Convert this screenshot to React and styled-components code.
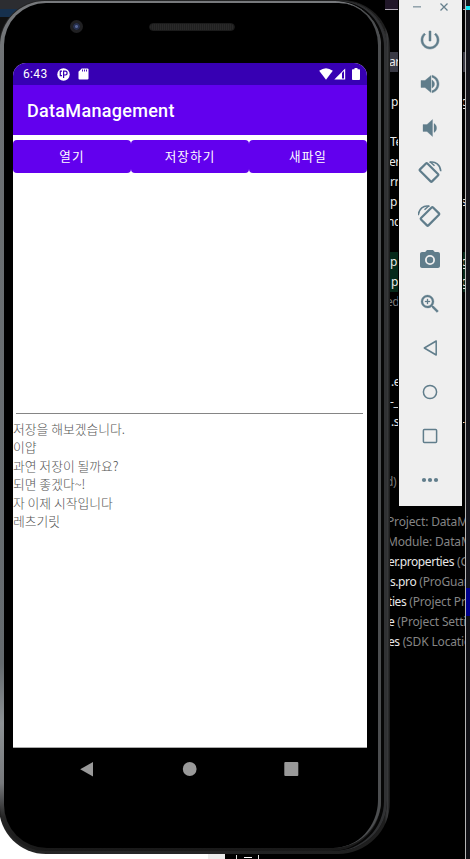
import React from "react";
import styled, { createGlobalStyle } from "styled-components";

const GlobalStyle = createGlobalStyle`
  * { box-sizing: border-box; }
  body { margin: 0; background: #000; overflow: hidden; }
`;

const Desktop = styled.main`
  position: relative;
  width: 470px;
  height: 859px;
  overflow: hidden;
  background: #000;
`;

/* IDE behind the emulator */
const Ide = styled.div`
  position: absolute;
  inset: 0;
  display: grid;
  grid-template-columns: 385px 80px 1px 4px;
`;
const PageBehind = styled.div`
  display: flex;
  flex-direction: column;
  justify-content: space-between;
`;
const TopCorner = styled.div`
  width: 60px;
  height: 50px;
  background: linear-gradient(#2c2d31 9px, #16304d 9px 17px, #111 17px);
`;
const BottomCorner = styled.div`
  height: 99px;
  background: linear-gradient(90deg, #fff 208px, #ececec 208px 225px, #000 225px);
`;
const Tree = styled.div`
  overflow: hidden;
`;
const TreeHead = styled.div`
  height: 10px;
  margin-left: -25px;
  background: #211729;
  border-bottom: 1px solid #b0aab5;
`;
const TreeRows = styled.div`
  padding-top: 2px;
`;
const Row = styled.div`
  display: flex;
  justify-content: space-between;
  height: 20px;
  padding-left: ${(p) => p.$x || 0}px;
  background: ${(p) => p.$bg || "transparent"};
  color: ${(p) => p.$color || "#e8e8e8"};
  font: 12px/20px "Noto Sans", "Noto Sans CJK KR", sans-serif;
  letter-spacing: -0.42px;
  white-space: pre;
`;
const Dim = styled.span`
  flex: 1;
  color: #858585;
  letter-spacing: -0.15px;
`;
const Tail = styled.span`
  width: 4px;
`;
const Divider = styled.div`
  background: #b5b5b5;
`;
const Edge = styled.div`
  background: linear-gradient(#15151c 6px, #13e5f5 6px 10px, #15151c 10px 588px, #00008c 588px 616px, #111116 616px);
`;
const BottomTab = styled.div`
  position: absolute;
  left: 236px;
  top: 855px;
  width: 23px;
  height: 4px;
  border: solid #ddd;
  border-width: 0 1px;
  display: flex;
  justify-content: center;
  align-items: center;
  &::after { content: ""; width: 8px; height: 1px; background: #fff; }
`;

/* Phone */
const Phone = styled.section`
  position: absolute;
  left: -1px;
  top: 0;
  width: 391px;
  height: 854px;
  padding: 1px 3px 3px 1px;
  border-radius: 46px 48px 52px 47px;
  background: linear-gradient(90deg, #222 0 1px, #262728 30%, #1e1e1e 98.6%, #3a3b3d 99.3%, #161616);
`;
const Bezel = styled.div`
  height: 100%;
  padding: 2px 6px 3px 4px;
  border-radius: 45px 46px 50px 46px;
  background: linear-gradient(180deg, #77797c, #6c7073 10%, #656b6f 78%, #8d9295 85%, #77797c 92%, #252525 96%, #191919);
  box-shadow: inset -3px 0 0 #303133, inset -6px 0 0 #060606;
`;
const Face = styled.div`
  display: flex;
  flex-direction: column;
  height: 100%;
  padding: 0 10px 0 9px;
  border-right: 3px solid #4c4e50;
  border-radius: 42px 42px 48px 43px;
  background: #000;
`;
const Hardware = styled.div`
  display: flex;
  align-items: flex-start;
  height: 60px;
  padding: 17px 0 0 57px;
`;
const Camera = styled.div`
  width: 13px;
  height: 13px;
  border: 3px solid #202022;
  border-radius: 50%;
  background: radial-gradient(circle, #566595 0 1px, #27304d 2px 3px, #101522 4px);
`;
const Speaker = styled.div`
  width: 86px;
  height: 8px;
  margin: 3px 0 0 66px;
  border-radius: 4px;
  border: 1px solid #1b1b1b;
  background: repeating-linear-gradient(90deg, #292929 0 1px, #202020 1px 2px);
`;
const Screen = styled.div`
  width: 354px;
  height: 685px;
  flex: none;
  display: flex;
  flex-direction: column;
  overflow: hidden;
  border-radius: 13px 13px 0 0;
  border-bottom: 1px solid #aaa;
  background: #fff;
`;
const StatusBar = styled.div`
  display: flex;
  align-items: center;
  height: 22px;
  padding: 0 7px 0 10px;
  background: #3700b3;
  color: #fff;
  font: 12px/22px Roboto, sans-serif;
  svg { display: block; }
`;
const Clock = styled.span`
  width: 34px;
  letter-spacing: 0.35px;
`;
const StatusIcons = styled.div`
  display: flex;
  align-items: center;
  gap: ${(p) => p.$gap}px;
  margin-left: ${(p) => (p.$end ? "auto" : 0)};
`;
const AppBar = styled.header`
  height: 50px;
  flex: none;
  padding-left: 14px;
  background: #6200ee;
  color: #fff;
  font: 500 18px/52px Roboto, sans-serif;
  letter-spacing: 0.3px;
`;
const Buttons = styled.div`
  display: grid;
  grid-template-columns: repeat(3, 1fr);
  padding-top: 5px;
  height: 38px;
`;
const AppButton = styled.button`
  padding: 0 0 2px;
  border: 0;
  border-radius: 4px;
  background: #6200ee;
  color: #fff;
  font: 400 12.6px/31px "Noto Sans CJK KR", sans-serif;
  letter-spacing: 1.1px;
`;
const Editor = styled.div`
  height: 241px;
  flex: none;
  margin: 0 4px 0 3px;
  border-bottom: 1px solid #858585;
`;
const Notes = styled.div`
  margin-top: 6px;
  color: #555;
  font: 300 12.8px/18.4px "Noto Sans CJK KR", sans-serif;
  white-space: pre;
`;
const NavBar = styled.nav`
  display: flex;
  justify-content: space-between;
  padding: 12px 68px 0 66px;
  height: 44px;
`;

/* Emulator controls */
const Controls = styled.aside`
  position: absolute;
  left: 399px;
  top: 0;
  width: 63px;
  height: 506px;
  display: flex;
  flex-direction: column;
  background: #efefef;
  color: #607d8b;
  outline: 1px solid #000;
`;
const WindowButtons = styled.div`
  display: flex;
  height: 18px;
  padding: 2px 0 0 13px;
  gap: 17px;
`;
const Control = styled.div`
  display: grid;
  place-items: center;
  height: 44px;
  padding-right: 2px;
`;

const Icon = ({ children }) => (
  <svg width="24" height="24" viewBox="0 0 24 24" fill="currentColor">{children}</svg>
);

const RotateShape = () => (
  <g fill="none" stroke="currentColor">
    <rect x="5.800" y="3.900" width="10.400" height="17" rx="1" strokeWidth="2.200" transform="rotate(-45 11 12.400)" />
    <path d="M11.500 2.300C17.500 .8 22.300 5 22.800 11.200" strokeWidth="1.500" />
    <path d="M12 1.800l4.500 4" strokeWidth="1.500" />
  </g>
);

const controls = [
  <Icon><path d="M13 3h-2v10h2V3zm4.83 2.17-1.42 1.42C17.99 7.86 19 9.81 19 12c0 3.87-3.13 7-7 7s-7-3.13-7-7c0-2.19 1.01-4.14 2.58-5.42L6.17 5.17C4.23 6.82 3 9.26 3 12c0 4.97 4.03 9 9 9s9-4.03 9-9c0-2.74-1.23-5.18-3.17-6.83z" stroke="currentColor" strokeWidth=".5" /></Icon>,
  <Icon><path d="M3 8.500v7h4l6 5V3.500l-6 5H3zm13.500 3.500c0-1.770-1.020-3.290-2.500-4.030v8.050c1.480-.73 2.500-2.250 2.500-4.020zM14 3.230v2.060c2.890.86 5 3.540 5 6.710s-2.110 5.850-5 6.710v2.060c4.010-.91 7-4.490 7-8.770s-2.990-7.860-7-8.770z" stroke="currentColor" strokeWidth=".4" /></Icon>,
  <Icon><path d="M5 8.500v7h4l5.500 5V3.500L9 8.500H5zm11-1v9c1.500-.9 2.600-2.500 2.600-4.500S17.500 8.400 16 7.500z" stroke="currentColor" strokeWidth=".3" /></Icon>,
  <Icon><RotateShape /></Icon>,
  <Icon><g transform="translate(23 0) scale(-1 1)"><RotateShape /></g></Icon>,
  <Icon><path fillRule="evenodd" d="M9 2 7.170 4H4c-1.100 0-2 .9-2 2v12c0 1.100.9 2 2 2h16c1.100 0 2-.9 2-2V6c0-1.100-.9-2-2-2h-3.170L15 2H9zm3 15a5 5 0 1 1 0-10 5 5 0 0 1 0 10z" /><circle cx="12" cy="12" r="3.200" /></Icon>,
  <Icon><path d="M15.5 14h-.79l-.28-.27A6.471 6.471 0 0 0 16 9.500 6.500 6.500 0 1 0 9.500 16c1.610 0 3.090-.59 4.230-1.570l.27.28v.79l5 4.990L20.490 19l-4.990-5zm-6 0C7.010 14 5 11.990 5 9.500S7.010 5 9.500 5 14 7.010 14 9.500 11.990 14 9.500 14zM12 10h-2v2H9v-2H7V9h2V7h1v2h2v1z" stroke="currentColor" strokeWidth=".3" /></Icon>,
  <Icon><path d="M18.200 5v14L6.300 12z" fill="none" stroke="currentColor" strokeWidth="1.500" strokeLinejoin="round" /></Icon>,
  <Icon><circle cx="12" cy="12" r="6.600" fill="none" stroke="currentColor" strokeWidth="1.500" /></Icon>,
  <Icon><rect x="5.400" y="5.400" width="13.200" height="13.200" rx="1" fill="none" stroke="currentColor" strokeWidth="1.500" /></Icon>,
  <Icon><circle cx="6" cy="12" r="2.100" /><circle cx="12" cy="12" r="2.100" /><circle cx="18" cy="12" r="2.100" /></Icon>,
];

const green = "#05291a";
const rows = [
  {}, {},
  { text: "ar", x: 4, bg: "#393944" }, {},
  { text: "p", x: 6, tail: "g" }, {},
  { text: "Te", x: 5 },
  { text: "er", x: 4 },
  { text: "rr", x: 5 },
  { text: "p", x: 5, tail: "s" },
  { text: "nc", x: 2 }, {},
  { text: "p", x: 5, bg: green, tail: "g" },
  { text: "p", x: 6, bg: green, tail: "g" },
  { text: "ed", x: 1, color: "#777" }, {}, {}, {},
  { text: ".e", x: 6 },
  { text: "-_", x: 5 },
  { text: ".s", x: 6, tail: "-" }, {}, {},
  { text: "d)", x: 1, color: "#777" }, {},
  { text: "", dim: "Project: DataM", x: 2 },
  { text: "", dim: "Module: DataM", x: 2 },
  { text: "er.properties", dim: " (G", x: 3 },
  { text: "s.pro", dim: " (ProGuard", x: 5 },
  { text: "ties", dim: " (Project Pro", x: 3 },
  { text: "e", dim: " (Project Settin", x: 3 },
  { text: "es", dim: " (SDK Locatio", x: 3 },
];

const notes = ["저장을 해보겠습니다.", "이얍", "과연 저장이 될까요?", "되면 좋겠다~!", "자 이제 시작입니다", "레츠기릿"];

export default function App() {
  return (
    <Desktop>
      <GlobalStyle />
      <Ide>
        <PageBehind>
          <TopCorner />
          <BottomCorner />
        </PageBehind>
        <Tree>
          <TreeHead />
          <TreeRows>
            {rows.map((r, i) => (
              <Row key={i} $x={r.x} $bg={r.bg} $color={r.color}>
                <span>{r.text}</span>
                {r.dim && <Dim>{r.dim}</Dim>}
                {r.tail && <Tail>{r.tail}</Tail>}
              </Row>
            ))}
          </TreeRows>
        </Tree>
        <Divider />
        <Edge />
      </Ide>
      <BottomTab />
      <Phone>
        <Bezel>
          <Face>
            <Hardware>
              <Camera />
              <Speaker />
            </Hardware>
            <Screen>
              <StatusBar>
                <Clock>6:43</Clock>
                <StatusIcons $gap={8}>
                  <svg width="13" height="13" viewBox="0 0 13 13">
                    <circle cx="6.500" cy="6.500" r="6.200" fill="#fff" />
                    <path d="M5 3.200H3.300v4.500H5M6.600 10V3.200h1.600a1.900 1.900 0 0 1 0 3.800H6.600" fill="none" stroke="#3700b3" strokeWidth="1.200" />
                  </svg>
                  <svg width="11" height="12" viewBox="0 0 11 12">
                    <path d="M3.700.5H9.500q1 0 1 1v9q0 1-1 1h-8q-1 0-1-1V3.700z" fill="#fff" />
                    <path d="M4.500 1.500v2M6.500 1.500v2M8.500 1.500v2" stroke="#3700b3" strokeWidth=".9" />
                  </svg>
                </StatusIcons>
                <StatusIcons $gap={1} $end>
                  <svg width="14" height="12" viewBox="0 0 14 12"><path d="M.2 2.800Q7-2.200 13.800 2.800L7 11.800z" fill="#fff" /></svg>
                  <svg width="12" height="12" viewBox="0 0 12 12">
                    <path d="M11.200.5V11.500H.3z" fill="#fff" />
                    <path d="M8 5l2-2v7.500H8z" fill="#3700b3" />
                  </svg>
                  <svg width="13" height="12" viewBox="0 0 13 12"><path d="M7.500 0h3v1.300h1.700q.8 0 .8.8v9q0 .9-.8.9H5.800q-.8 0-.8-.9v-9q0-.8.8-.8h1.700z" fill="#fff" /></svg>
                </StatusIcons>
              </StatusBar>
              <AppBar>DataManagement</AppBar>
              <Buttons>
                <AppButton>열기</AppButton>
                <AppButton>저장하기</AppButton>
                <AppButton>새파일</AppButton>
              </Buttons>
              <Editor />
              <Notes>{notes.join("\n")}</Notes>
            </Screen>
            <NavBar>
              <svg width="16" height="18" viewBox="0 0 16 18"><path d="M14 2v14.500L1.200 9.200z" fill="#999" /></svg>
              <svg width="18" height="18" viewBox="0 0 18 18"><circle cx="9.700" cy="9" r="6.900" fill="#999" /></svg>
              <svg width="18" height="18" viewBox="0 0 18 18"><rect x="2.300" y="2" width="14" height="14" rx="1" fill="#999" /></svg>
            </NavBar>
          </Face>
        </Bezel>
      </Phone>
      <Controls>
        <WindowButtons>
          <svg width="10" height="10" viewBox="0 0 10 10"><path d="M1 4.800h8" stroke="#8fa0a9" strokeWidth="1.500" /></svg>
          <svg width="10" height="10" viewBox="0 0 10 10"><path d="M1.500 1.500l7 7M8.500 1.500l-7 7" stroke="#657f8c" strokeWidth="1.300" /></svg>
        </WindowButtons>
        {controls.map((c, i) => <Control key={i}>{c}</Control>)}
      </Controls>
    </Desktop>
  );
}
